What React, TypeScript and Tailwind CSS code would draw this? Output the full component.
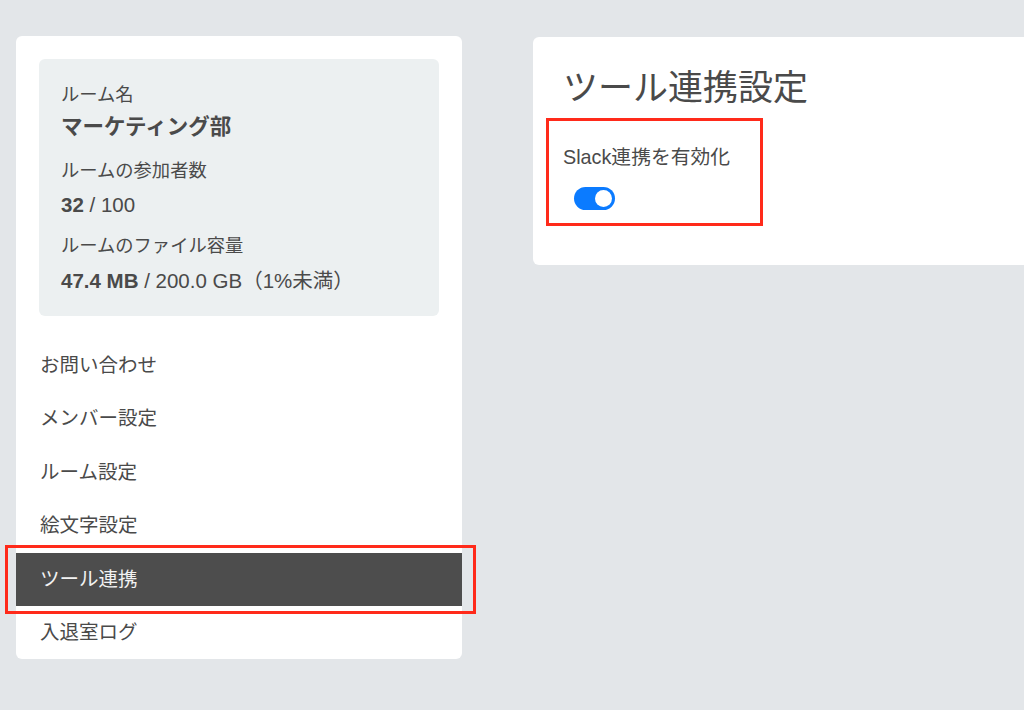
import React from "react";

const menu = ["お問い合わせ", "メンバー設定", "ルーム設定", "絵文字設定", "ツール連携", "入退室ログ"];

const font = { fontFamily: '"Liberation Sans", "Noto Sans CJK JP", sans-serif' };

const RoomInfo = () => {
  return (
    <div className="rounded-md bg-[#ecf0f1] px-[22px] pt-[24px] pb-[23px] text-[#4a4a4a]">
      <p className="text-[18.3px] leading-[24px]">ルーム名</p>
      <p className="mt-[6px] text-[21.5px] leading-[28px] font-bold">マーケティング部</p>
      <p className="mt-[18px] text-[18.3px] leading-[24px]">ルームの参加者数</p>
      <p className="mt-[10px] text-[20.5px] leading-[24px]">
        <span className="font-bold">32</span> / 100
      </p>
      <p className="mt-[17px] text-[18.3px] leading-[24px]">ルームのファイル容量</p>
      <p className="mt-[11px] text-[20.5px] leading-[24px]">
        <span className="font-bold">47.4 MB</span> / 200.0 GB（1%未満）
      </p>
    </div>
  );
};

const SideNav = () => {
  return (
    <div className="w-[446px] shrink-0 rounded-md bg-white pt-[23px]">
      <div className="px-[23px]">
        <RoomInfo />
      </div>
      <ul className="mt-[23px]">
        {menu.map((item) => {
          const active = item === "ツール連携";
          return (
            <li
              key={item}
              className={
                active
                  ? "relative flex h-[53.4px] items-center bg-[#4d4d4d] pl-6 text-[19.5px] text-[#f2f2f2]"
                  : "flex h-[53.4px] items-center pl-6 text-[19.5px] text-[#4a4a4a]"
              }
            >
              {item}
              {active && (
                <div className="pointer-events-none absolute -top-[8px] -bottom-[8px] -left-[11px] -right-[14px] border-[3px] border-[#ff2a1a]" />
              )}
            </li>
          );
        })}
      </ul>
    </div>
  );
};

const Toggle = () => {
  return (
    <div className="ml-[11px] flex h-[23px] w-[41px] items-center justify-end rounded-full bg-[#0b7bff] pr-[3px]">
      <div className="h-[17px] w-[17px] rounded-full bg-white" />
    </div>
  );
};

const ToolSettings = () => {
  return (
    <div className="w-[520px] shrink-0 self-start rounded-md bg-white px-[30px] pt-[31px] pb-[55px] text-[#4a4a4a]">
      <h1 className="text-[35px] leading-[40px]">ツール連携設定</h1>
      <div className="relative mt-[37px] w-[169px]">
        <p className="whitespace-nowrap text-[19.8px] leading-[24px]">Slack連携を有効化</p>
        <div className="mt-[18px]">
          <Toggle />
        </div>
        <div className="pointer-events-none absolute -top-[27px] -bottom-[16px] -left-[17px] -right-[31px] border-[3px] border-[#ff2a1a]" />
      </div>
    </div>
  );
};

export default function App() {
  return (
    <div style={font} className="flex h-[710px] w-[1024px] gap-[71px] overflow-hidden bg-[#e3e6e9] pl-4 pt-[36px]">
      <div className="self-start">
        <SideNav />
      </div>
      <div className="pt-px">
        <ToolSettings />
      </div>
    </div>
  );
}
